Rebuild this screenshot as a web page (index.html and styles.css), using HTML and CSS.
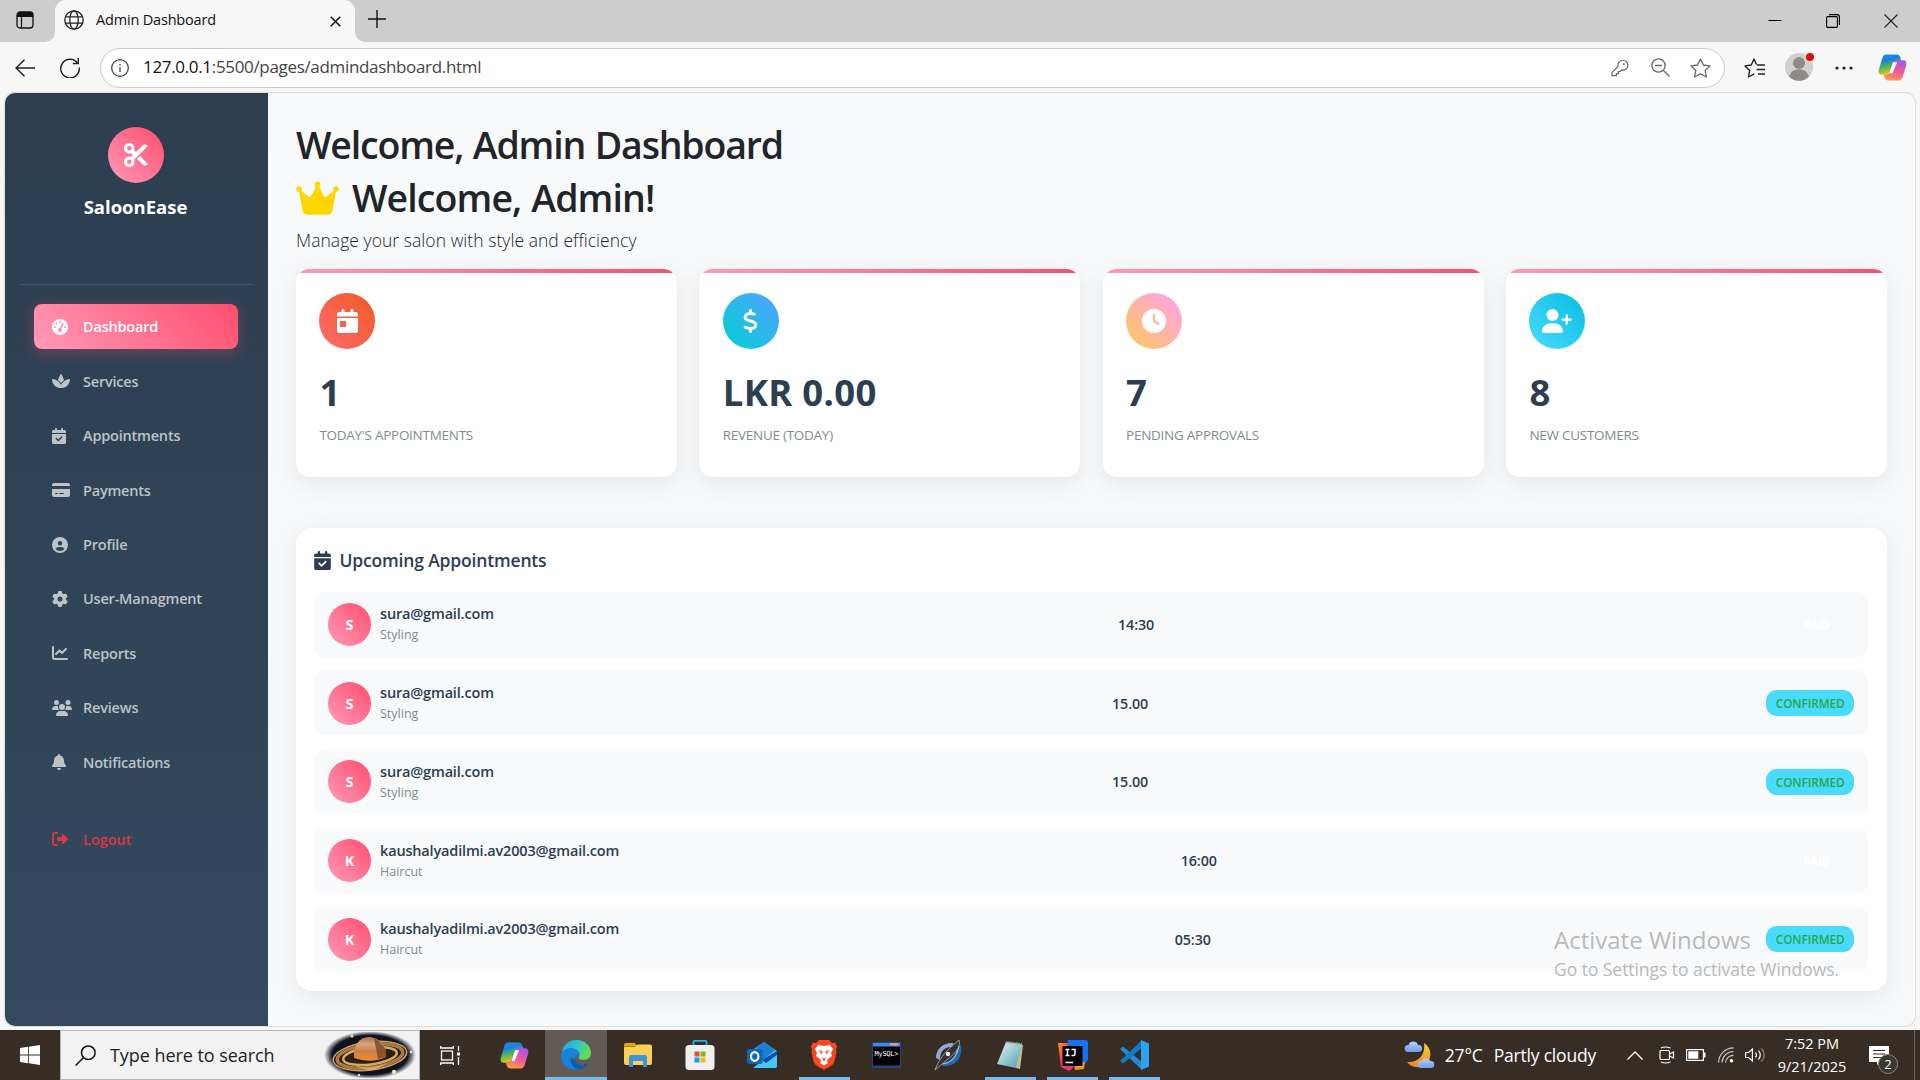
FILE: index.html
```html
<!DOCTYPE html>
<html lang="en">
<head>
<meta charset="utf-8">
<title>Admin Dashboard</title>
<link rel="stylesheet" href="styles.css">
</head>
<body>
<svg class="defs" width="0" height="0" aria-hidden="true">
  <defs>
    <linearGradient id="cpA" x1="0" y1="0" x2="0.3" y2="1"><stop offset="0" stop-color="#1a8ff0"/><stop offset=".35" stop-color="#1c7fe0"/><stop offset=".65" stop-color="#4fb957"/><stop offset="1" stop-color="#f2c11a"/></linearGradient>
    <linearGradient id="cpB" x1="0.6" y1="0" x2="0.3" y2="1"><stop offset="0" stop-color="#a855f0"/><stop offset=".5" stop-color="#f0569a"/><stop offset="1" stop-color="#ff9a4a"/></linearGradient>
    <linearGradient id="edA" x1="0" y1="0" x2="1" y2=".4"><stop offset="0" stop-color="#1ea4e8"/><stop offset=".5" stop-color="#2fc3d4"/><stop offset="1" stop-color="#62dc52"/></linearGradient>
    <linearGradient id="edB" x1="0" y1="0" x2="1" y2="1"><stop offset="0" stop-color="#1a90e0"/><stop offset="1" stop-color="#0c4fa0"/></linearGradient>
    <linearGradient id="moon" x1="0" y1="0" x2="0" y2="1"><stop offset="0" stop-color="#ffd23c"/><stop offset="1" stop-color="#f0821e"/></linearGradient>
    <linearGradient id="cloud" x1="0" y1="0" x2="0" y2="1"><stop offset="0" stop-color="#b9d0fa"/><stop offset="1" stop-color="#6f9cf0"/></linearGradient>
    <linearGradient id="pad" x1="0" y1="0" x2="1" y2="1"><stop offset="0" stop-color="#e4f6f7"/><stop offset="1" stop-color="#4f9fae"/></linearGradient>
    <linearGradient id="ij" x1="0" y1="0" x2="1" y2="1"><stop offset="0" stop-color="#ff8a1e"/><stop offset=".5" stop-color="#ff3358"/><stop offset="1" stop-color="#e0338a"/></linearGradient>
    <linearGradient id="planet" x1="0" y1="0" x2="0" y2="1"><stop offset="0" stop-color="#a8714a"/><stop offset=".3" stop-color="#d9a57c"/><stop offset=".6" stop-color="#c98044"/><stop offset="1" stop-color="#f08c28"/></linearGradient>
    <radialGradient id="space"><stop offset="0" stop-color="#0b0d1c"/><stop offset=".82" stop-color="#10121f"/><stop offset="1" stop-color="#10121f" stop-opacity="0"/></radialGradient>
    <symbol id="copilot" viewBox="0 0 28 26">
      <path d="M8 .5h10c2 0 3 1 3.600 3l1 3.500h-5c-2 0-3 1-3.600 3l-2.600 7c-.6 2-1.600 3-3.600 3H4C1 20 0 18 .8 15L4.300 3.500C5 1.500 6 .5 8 .5z" fill="url(#cpA)"/>
      <path d="M20 25.500H10c-2 0-3-1-3.600-3L5.700 20c3 .3 5-.3 5.900-3l3-8c.6-2 1.600-3 3.600-3H24c3 0 4 2 3.200 5l-3.500 11.500c-.6 2-1.700 3-3.700 3z" fill="url(#cpB)"/>
      <path d="M14.500 8h4l-4.500 10.500h-3z" fill="#fff"/>
    </symbol>
    <symbol id="cal-check" viewBox="0 0 448 512"><path d="M128 0c17.700 0 32 14.300 32 32V64H288V32c0-17.700 14.300-32 32-32s32 14.300 32 32V64h48c26.500 0 48 21.500 48 48v48H0V112C0 85.500 21.500 64 48 64H96V32c0-17.700 14.300-32 32-32zM0 192H448V464c0 26.500-21.500 48-48 48H48c-26.500 0-48-21.500-48-48V192zM329 305c9.400-9.400 9.400-24.600 0-33.900s-24.600-9.400-33.900 0l-95 95-47-47c-9.400-9.400-24.600-9.400-33.900 0s-9.400 24.600 0 33.900l64 64c9.400 9.400 24.600 9.400 33.900 0L329 305z"/></symbol>
  </defs>
</svg>

<header class="tabs">
  <div class="tab-actions"><svg width="18" height="18" viewBox="0 0 18 18"><rect x="1" y="1" width="16" height="16" rx="3" fill="none" stroke="#111" stroke-width="1.300"/><path d="M1 6V4a3 3 0 0 1 3-3h10a3 3 0 0 1 3 3v2z" fill="#111"/><path d="M5.500 5v12" stroke="#111" stroke-width="1.200"/></svg></div>
  <div class="tab">
    <svg width="20" height="20" viewBox="0 0 20 20" fill="none" stroke="#222" stroke-width="1.300"><circle cx="10" cy="10" r="9.200"/><ellipse cx="10" cy="10" rx="4.200" ry="9.200"/><path d="M1.500 6.800h17M1.500 13.200h17"/></svg>
    <span class="tab-title">Admin Dashboard</span>
    <svg class="tab-close" width="11" height="11" viewBox="0 0 11 11" stroke="#111" stroke-width="1.500"><path d="M.7.7l9.600 9.600M10.300.7L.7 10.300"/></svg>
  </div>
  <div class="tab-rest">
    <svg class="new-tab" width="18" height="18" viewBox="0 0 18 18" stroke="#111" stroke-width="1.400"><path d="M9 0v18M0 9h18"/></svg>
    <div class="win-controls">
      <svg width="14" height="14" viewBox="0 0 14 14" stroke="#000" stroke-width="1"><path d="M.5 6.500h13"/></svg>
      <svg width="14" height="14" viewBox="0 0 14 14" fill="none" stroke="#000" stroke-width="1.100"><rect x=".6" y="2.600" width="10.800" height="10.800" rx="1"/><path d="M3 .6h8a2.400 2.400 0 0 1 2.400 2.400v8"/></svg>
      <svg width="14" height="14" viewBox="0 0 14 14" stroke="#222" stroke-width="1.100"><path d="M.5.5l13 13M13.500.5l-13 13"/></svg>
    </div>
  </div>
</header>

<nav class="toolbar">
  <svg class="back" width="20" height="18" viewBox="0 0 20 18" fill="none" stroke="#222" stroke-width="1.400"><path d="M20 9H1M9.500.7L1 9l8.500 8.300"/></svg>
  <svg class="reload" width="22" height="21" viewBox="0 0 22 21" fill="none" stroke="#222" stroke-width="1.400"><path d="M18.500 6A9.300 9.300 0 1 0 20.300 10.500"/><path d="M19.300 1v5.500h-5.500"/></svg>
  <div class="address">
    <svg width="18" height="18" viewBox="0 0 18 18" fill="none" stroke="#444" stroke-width="1.300"><circle cx="9" cy="9" r="8.300"/><path d="M9 8v5M9 5v1.500"/></svg>
    <span class="url"><span class="host">127.0.0.1</span>:5500/pages/admindashboard.html</span>
    <svg class="key" width="18" height="18" viewBox="0 0 18 18" fill="none" stroke="#666" stroke-width="1.200"><path d="M7 7.500a5 5 0 1 1 3.600 3.600L9 12.600H7.300v2H5.400v2H1v-3.200z"/><circle cx="12.800" cy="5.200" r=".9" fill="#666" stroke="none"/></svg>
    <svg width="19" height="19" viewBox="0 0 19 19" fill="none" stroke="#666" stroke-width="1.300"><circle cx="7.500" cy="7.500" r="6.600"/><path d="M12.500 12.500l6 6M4 7.500h7"/></svg>
    <svg width="21" height="20" viewBox="0 0 21 20" fill="none" stroke="#666" stroke-width="1.300" stroke-linejoin="round"><path d="M10.500 1l2.900 6 6.600.9-4.800 4.600 1.200 6.500-5.900-3.100L4.600 19l1.200-6.500L1 7.900 7.600 7z"/></svg>
  </div>
  <svg class="favs" width="21" height="20" viewBox="0 0 21 20" fill="none" stroke="#222" stroke-width="1.400" stroke-linejoin="round"><path d="M12.500 6.500L10 1 7.300 7 1 7.900l4.600 4.600L4.500 19l5.800-3.200M13 7h8M12.500 11.500H21M14 16h7"/></svg>
  <svg class="user" width="30" height="30" viewBox="0 0 30 30"><circle cx="14" cy="16" r="14" fill="#d3d1ce"/><circle cx="14" cy="12" r="6" fill="#8f8a87"/><path d="M4 25.500a10.500 10.500 0 0 1 20 0A14 14 0 0 1 4 25.500z" fill="#8f8a87"/><circle cx="25" cy="6" r="4" fill="#e00b0b"/></svg>
  <svg class="more" width="18" height="4" viewBox="0 0 18 4" fill="#222"><circle cx="2" cy="2" r="1.600"/><circle cx="9" cy="2" r="1.600"/><circle cx="16" cy="2" r="1.600"/></svg>
  <svg class="cp" width="29" height="27"><use href="#copilot"/></svg>
</nav>

<div class="page">
  <aside class="sidebar">
    <div class="brand">
      <div class="brand-logo"><svg width="24" height="24" viewBox="0 0 512 512" fill="#fff"><path d="M256 192l-39.500-39.500c4.900-12.600 7.500-26.200 7.500-40.500C224 50.100 173.900 0 112 0S0 50.100 0 112s50.100 112 112 112c14.300 0 27.900-2.700 40.500-7.500L192 256l-39.500 39.500c-12.600-4.900-26.200-7.500-40.500-7.500C50.100 288 0 338.100 0 400s50.100 112 112 112s112-50.100 112-112c0-14.300-2.700-27.900-7.500-40.500L499.200 76.800c7.100-7.100 7.100-18.500 0-25.600c-28.300-28.300-74.100-28.300-102.400 0L256 192zm22.600 150.600L396.800 460.800c28.300 28.300 74.100 28.300 102.400 0c7.100-7.100 7.100-18.500 0-25.600L342.600 278.600l-64 64zM64 112a48 48 0 1 1 96 0 48 48 0 1 1 -96 0zm48 240a48 48 0 1 1 0 96 48 48 0 1 1 0-96z"/></svg></div>
      <span class="brand-name">SaloonEase</span>
    </div>
    <ul class="menu">
      <li class="item active"><svg viewBox="0 0 512 512" width="16" height="16"><path d="M0 256a256 256 0 1 1 512 0A256 256 0 1 1 0 256zM288 96a32 32 0 1 0 -64 0 32 32 0 1 0 64 0zM256 416c35.300 0 64-28.700 64-64c0-17.400-6.900-33.100-18.100-44.600L366 161.700c5.300-12.100-.2-26.300-12.300-31.600s-26.300 .2-31.600 12.300L257.900 288c-.6 0-1.300 0-1.900 0c-35.300 0-64 28.700-64 64s28.700 64 64 64zM176 144a32 32 0 1 0 -64 0 32 32 0 1 0 64 0zM96 288a32 32 0 1 0 0-64 32 32 0 1 0 0 64zm352-32a32 32 0 1 0 -64 0 32 32 0 1 0 64 0z"/></svg><span>Dashboard</span></li>
      <li class="item"><svg viewBox="0 0 576 512" width="18" height="16"><path d="M186 235C210 170 245 95 277 35q11-12 22 0C331 95 366 170 390 235C350 255 312 290 288 325C264 290 226 255 186 235z"/><path d="M0 206C0 196 5 191 15 192C130 200 230 265 288 375C346 265 446 200 561 192q15 0 15 14C570 340 470 480 311 480H265C106 480 6 340 0 206z"/></svg><span>Services</span></li>
      <li class="item"><svg width="14" height="16"><use href="#cal-check"/></svg><span>Appointments</span></li>
      <li class="item"><svg viewBox="0 0 576 512" width="18" height="16"><path d="M64 32C28.700 32 0 60.700 0 96v32H576V96c0-35.300-28.700-64-64-64H64zM576 224H0V416c0 35.300 28.700 64 64 64H512c35.300 0 64-28.700 64-64V224zM112 352h64c8.800 0 16 7.200 16 16s-7.200 16-16 16H112c-8.800 0-16-7.200-16-16s7.200-16 16-16zm112 16c0-8.800 7.200-16 16-16H368c8.800 0 16 7.200 16 16s-7.200 16-16 16H240c-8.800 0-16-7.200-16-16z"/></svg><span>Payments</span></li>
      <li class="item"><svg viewBox="0 0 512 512" width="16" height="16"><path d="M399 384.200C376.900 345.800 335.400 320 288 320H224c-47.400 0-88.900 25.800-111 64.200c35.200 39.200 86.200 63.800 143 63.800s107.800-24.700 143-63.800zM0 256a256 256 0 1 1 512 0A256 256 0 1 1 0 256zm256 16a72 72 0 1 0 0-144 72 72 0 1 0 0 144z" fill-rule="evenodd"/></svg><span>Profile</span></li>
      <li class="item"><svg viewBox="0 0 512 512" width="16" height="16"><path d="M495.900 166.600c3.200 8.700 .5 18.400-6.400 24.600l-43.300 39.400c1.100 8.300 1.700 16.800 1.700 25.400s-.6 17.100-1.700 25.400l43.300 39.400c6.900 6.200 9.600 15.900 6.400 24.600c-4.400 11.900-9.700 23.300-15.800 34.300l-4.700 8.100c-6.600 11-14 21.400-22.100 31.200c-5.900 7.200-15.700 9.600-24.500 6.800l-55.700-17.700c-13.400 10.300-28.200 18.900-44 25.400l-12.500 57.100c-2 9.100-9 16.300-18.200 17.800c-13.800 2.300-28 3.500-42.500 3.500s-28.700-1.200-42.500-3.500c-9.200-1.500-16.200-8.700-18.200-17.800l-12.500-57.100c-15.800-6.500-30.600-15.100-44-25.400L83.100 425.900c-8.800 2.800-18.600 .3-24.500-6.800c-8.100-9.800-15.500-20.200-22.100-31.200l-4.700-8.100c-6.100-11-11.400-22.400-15.800-34.300c-3.200-8.700-.5-18.400 6.400-24.600l43.300-39.400C64.600 273.100 64 264.600 64 256s.6-17.100 1.700-25.400L22.400 191.200c-6.900-6.200-9.600-15.900-6.400-24.600c4.400-11.900 9.700-23.300 15.800-34.300l4.700-8.100c6.600-11 14-21.400 22.100-31.200c5.900-7.200 15.700-9.600 24.500-6.800l55.700 17.700c13.400-10.300 28.200-18.900 44-25.400l12.500-57.100c2-9.100 9-16.300 18.200-17.800C227.300 1.200 241.500 0 256 0s28.700 1.200 42.500 3.500c9.200 1.500 16.200 8.700 18.200 17.800l12.500 57.100c15.800 6.500 30.600 15.100 44 25.400l55.700-17.700c8.800-2.800 18.600-.3 24.500 6.800c8.100 9.800 15.500 20.200 22.100 31.200l4.700 8.100c6.100 11 11.400 22.400 15.800 34.300zM256 336a80 80 0 1 0 0-160 80 80 0 1 0 0 160z"/></svg><span>User-Managment</span></li>
      <li class="item"><svg viewBox="0 0 512 512" width="16" height="16"><path d="M64 64c0-17.700-14.300-32-32-32S0 46.300 0 64V400c0 44.200 35.800 80 80 80H480c17.700 0 32-14.300 32-32s-14.300-32-32-32H80c-8.800 0-16-7.200-16-16V64zm406.600 86.600c12.500-12.500 12.500-32.800 0-45.300s-32.800-12.500-45.300 0L320 210.700l-57.400-57.400c-12.500-12.500-32.800-12.500-45.300 0l-112 112c-12.500 12.500-12.500 32.800 0 45.300s32.800 12.500 45.300 0L240 221.300l57.400 57.400c12.500 12.500 32.800 12.500 45.300 0l128-128z"/></svg><span>Reports</span></li>
      <li class="item"><svg viewBox="0 0 640 512" width="20" height="16"><path d="M144 0a80 80 0 1 1 0 160A80 80 0 1 1 144 0zM512 0a80 80 0 1 1 0 160A80 80 0 1 1 512 0zM0 298.700C0 239.800 47.800 192 106.700 192h42.700c15.900 0 31 3.500 44.600 9.700c-1.300 7.200-1.900 14.700-1.900 22.300c0 38.200 16.800 72.500 43.300 96c-.2 0-.4 0-.7 0H21.300C9.600 320 0 310.400 0 298.700zM405.300 320c-.2 0-.4 0-.7 0c26.600-23.500 43.300-57.800 43.300-96c0-7.600-.7-15-1.900-22.300c13.600-6.300 28.700-9.700 44.600-9.700h42.700C592.200 192 640 239.800 640 298.700c0 11.800-9.600 21.300-21.300 21.300H405.300zM224 224a96 96 0 1 1 192 0 96 96 0 1 1 -192 0zM128 485.300C128 411.700 187.700 352 261.300 352H378.700C452.300 352 512 411.700 512 485.300c0 14.700-11.900 26.700-26.700 26.700H154.700c-14.700 0-26.700-11.900-26.700-26.700z"/></svg><span>Reviews</span></li>
      <li class="item"><svg viewBox="0 0 448 512" width="14" height="16"><path d="M224 0c-17.700 0-32 14.300-32 32V51.200C119 66 64 130.600 64 208v18.800c0 47-17.300 92.400-48.500 127.600l-7.400 8.300c-8.400 9.400-10.400 22.900-5.300 34.400S19.400 416 32 416H416c12.600 0 24-7.400 29.200-18.900s3.100-25-5.300-34.400l-7.400-8.300C401.300 319.200 384 273.900 384 226.800V208c0-77.400-55-142-128-156.800V32c0-17.700-14.300-32-32-32zm45.300 493.300c12-12 18.700-28.300 18.700-45.300H160c0 17 6.700 33.300 18.700 45.300s28.300 18.700 45.300 18.700s33.300-6.700 45.300-18.700z"/></svg><span>Notifications</span></li>
      <li class="item logout"><svg viewBox="0 0 512 512" width="16" height="16"><path d="M377.900 105.900L500.700 228.700c7.200 7.200 11.300 17.100 11.300 27.300s-4.100 20.100-11.300 27.300L377.900 406.100c-6.400 6.400-15 9.900-24 9.900c-18.700 0-33.900-15.200-33.900-33.900l0-62.100-128 0c-17.700 0-32-14.300-32-32l0-64c0-17.700 14.300-32 32-32l128 0 0-62.100c0-18.700 15.200-33.900 33.900-33.900c9 0 17.600 3.600 24 9.900zM160 96L96 96c-17.700 0-32 14.300-32 32l0 256c0 17.700 14.300 32 32 32l64 0c17.700 0 32 14.300 32 32s-14.300 32-32 32l-64 0c-53 0-96-43-96-96L0 128C0 75 43 32 96 32l64 0c17.700 0 32 14.300 32 32s-14.300 32-32 32z"/></svg><span>Logout</span></li>
    </ul>
  </aside>

  <main class="main">
    <h1 class="title">Welcome, Admin Dashboard</h1>
    <h1 class="title second"><svg viewBox="0 0 576 512" width="43" height="38" fill="#ffd700"><path d="M309 106c11.400-7 19-19.700 19-34c0-22.100-17.900-40-40-40s-40 17.900-40 40c0 14.400 7.600 27 19 34L209.700 220.600c-9.100 18.200-32.700 23.400-48.600 10.700L72 160c5-6.700 8-15 8-24c0-22.100-17.900-40-40-40S0 113.900 0 136s17.900 40 40 40c.2 0 .5 0 .7 0L86.400 427.400c5.500 30.400 32 52.600 63 52.600l277.200 0c30.900 0 57.400-22.100 63-52.600L535.300 176c.2 0 .5 0 .7 0c22.100 0 40-17.900 40-40s-17.900-40-40-40s-40 17.900-40 40c0 9 3 17.300 8 24l-89.100 71.300c-15.900 12.700-39.500 7.500-48.600-10.700L309 106z"/></svg><span>Welcome, Admin!</span></h1>
    <p class="lead">Manage your salon with style and efficiency</p>

    <section class="stats">
      <article class="card">
        <div class="bubble orange"><svg viewBox="0 0 448 512" width="21" height="24"><path fill-rule="evenodd" d="M128 0c17.700 0 32 14.300 32 32V64H288V32c0-17.700 14.300-32 32-32s32 14.300 32 32V64h48c26.500 0 48 21.500 48 48v48H0V112C0 85.500 21.500 64 48 64H96V32c0-17.700 14.300-32 32-32zM0 192H448V464c0 26.500-21.500 48-48 48H48c-26.500 0-48-21.500-48-48V192zm80 64c-8.800 0-16 7.200-16 16v96c0 8.800 7.200 16 16 16h96c8.800 0 16-7.200 16-16V272c0-8.800-7.200-16-16-16H80z"/></svg></div>
        <div class="value">1</div><div class="label">TODAY'S APPOINTMENTS</div>
      </article>
      <article class="card">
        <div class="bubble blue"><svg viewBox="0 0 320 512" width="15" height="24"><path d="M160 0c17.700 0 32 14.300 32 32V67.700c1.600 .2 3.100 .4 4.700 .7c.4 .1 .7 .1 1.100 .2l48 8.800c17.400 3.200 28.900 19.900 25.700 37.200s-19.900 28.900-37.200 25.700l-47.500-8.700c-31.300-4.600-58.900-1.500-78.300 6.200s-27.200 18.300-29 28.100c-2 10.700-.5 16.700 1.200 20.400c1.800 3.900 5.500 8.300 12.800 13.200c16.300 10.700 41.300 17.700 73.700 26.300l2.900 .8c28.600 7.600 63.600 16.800 89.600 33.800c14.200 9.300 27.600 21.900 35.900 39.500c8.500 17.900 10.300 37.900 6.400 59.200c-6.900 38-33.100 63.400-65.600 76.700c-13.700 5.600-28.600 9.200-44.400 11V480c0 17.700-14.300 32-32 32s-32-14.300-32-32V445.100c-.4-.1-.9-.1-1.300-.2l-.2 0 0 0c-24.400-3.800-64.500-14.300-91.500-26.300c-16.100-7.200-23.400-26.100-16.200-42.200s26.100-23.400 42.200-16.200c20.900 9.300 55.300 18.500 75.200 21.600c31.900 4.700 58.200 2 76-5.300c16.900-6.900 24.600-16.900 26.800-28.900c1.900-10.600 .4-16.700-1.300-20.400c-1.900-4-5.600-8.400-13-13.300c-16.400-10.700-41.500-17.700-74-26.300l-2.800-.7 0 0C119.400 279.300 84.400 270 58.400 253c-14.200-9.300-27.500-22-35.800-39.600c-8.400-17.900-10.100-37.900-6.100-59.200C23.700 116 52.300 91.200 84.800 78.300c13.300-5.300 27.900-8.900 43.200-11V32c0-17.700 14.300-32 32-32z"/></svg></div>
        <div class="value">LKR 0.00</div><div class="label">REVENUE (TODAY)</div>
      </article>
      <article class="card">
        <div class="bubble peach"><svg viewBox="0 0 512 512" width="24" height="24"><path d="M256 0a256 256 0 1 1 0 512A256 256 0 1 1 256 0zM232 120V256c0 8 4 15.500 10.700 20l96 64c11 7.400 25.900 4.400 33.300-6.700s4.400-25.900-6.700-33.300L280 243.200V120c0-13.300-10.700-24-24-24s-24 10.700-24 24z"/></svg></div>
        <div class="value">7</div><div class="label">PENDING APPROVALS</div>
      </article>
      <article class="card">
        <div class="bubble cyan"><svg viewBox="0 0 640 512" width="30" height="24"><path d="M96 128a128 128 0 1 1 256 0A128 128 0 1 1 96 128zM0 482.300C0 383.800 79.800 304 178.300 304h91.400C368.200 304 448 383.800 448 482.300c0 16.400-13.300 29.700-29.700 29.700H29.700C13.300 512 0 498.700 0 482.300zM504 312V248H440c-13.300 0-24-10.700-24-24s10.700-24 24-24h64V136c0-13.300 10.700-24 24-24s24 10.700 24 24v64h64c13.300 0 24 10.700 24 24s-10.700 24-24 24H552v64c0 13.300-10.700 24-24 24s-24-10.700-24-24z"/></svg></div>
        <div class="value">8</div><div class="label">NEW CUSTOMERS</div>
      </article>
    </section>

    <section class="panel">
      <h2 class="panel-title"><svg width="17" height="19"><use href="#cal-check"/></svg><span>Upcoming Appointments</span></h2>
      <div class="rows">
        <div class="row"><div class="client"><div class="avatar">S</div><div class="info"><div class="name">sura@gmail.com</div><div class="service">Styling</div></div></div><div class="time">14:30</div><span class="badge paid">PAID</span></div>
        <div class="row"><div class="client"><div class="avatar">S</div><div class="info"><div class="name">sura@gmail.com</div><div class="service">Styling</div></div></div><div class="time">15.00</div><span class="badge">CONFIRMED</span></div>
        <div class="row"><div class="client"><div class="avatar">S</div><div class="info"><div class="name">sura@gmail.com</div><div class="service">Styling</div></div></div><div class="time">15.00</div><span class="badge">CONFIRMED</span></div>
        <div class="row"><div class="client"><div class="avatar">K</div><div class="info"><div class="name">kaushalyadilmi.av2003@gmail.com</div><div class="service">Haircut</div></div></div><div class="time">16:00</div><span class="badge paid">PAID</span></div>
        <div class="row"><div class="client"><div class="avatar">K</div><div class="info"><div class="name">kaushalyadilmi.av2003@gmail.com</div><div class="service">Haircut</div></div></div><div class="time">05:30</div><span class="badge">CONFIRMED</span></div>
      </div>
    </section>
  </main>
</div>

<div class="watermark"><div class="wm-title">Activate Windows</div><div class="wm-text">Go to Settings to activate Windows.</div></div>

<footer class="taskbar">
  <div class="start"><svg width="20" height="20" viewBox="0 0 20 20" fill="#fff"><path d="M0 2.900l8.200-1.100v7.800H0zM9 1.700L20 0v9.600H9zM0 10.400h8.200v7.800L0 17.100zM9 10.400h11V20L9 18.300z"/></svg></div>
  <div class="search">
    <svg width="21" height="21" viewBox="0 0 21 21" fill="none" stroke="#111" stroke-width="1.500"><circle cx="13.300" cy="7.700" r="6.800"/><path d="M8.600 12.500L.6 20.500"/></svg>
    <span class="search-text">Type here to search</span>
    <svg class="saturn" width="92" height="46" viewBox="0 0 92 46"><ellipse cx="46" cy="23" rx="46" ry="24" fill="url(#space)"/><g transform="rotate(-7 46 24)"><ellipse cx="46" cy="24" rx="37" ry="14" fill="#2a2018" stroke="#c9a06a" stroke-width="1.500"/><ellipse cx="46" cy="24" rx="33" ry="11.500" fill="none" stroke="#a87a3c" stroke-width="3.500"/><ellipse cx="46" cy="24" rx="27" ry="8.500" fill="none" stroke="#d9ab68" stroke-width="2.500"/></g><path d="M30 26c-1-12 5-21 15-21s18 9 17 20q-15 7-32 1z" fill="url(#planet)"/><path d="M50 6c8 4 13 11 12 19l-8 2z" fill="#6b3d1e" opacity=".7"/><path d="M30 33q16 6 33-2-10 7-17 7t-16-5z" fill="#d9ab68"/><g fill="#f5dfc0"><circle cx="28" cy="4" r="1.500"/><circle cx="70" cy="40" r="2.200"/><circle cx="35" cy="43" r="1.200"/><circle cx="87" cy="20" r="1.200"/><circle cx="15" cy="41" r="1"/></g></svg>
  </div>
  <div class="app view"><svg width="20" height="19" viewBox="0 0 20 19" fill="none" stroke="#fff" stroke-width="1.300"><rect x="1.500" y="5" width="11" height="9"/><path d="M.7 0v2h12.600V0M.7 19v-2h12.600v2M18.500 0v5M18.500 11v8"/><path d="M17 8h3" stroke-width="3"/></svg></div>
  <div class="app"><svg width="29" height="27"><use href="#copilot"/></svg></div>
  <div class="app active"><svg width="30" height="30" viewBox="0 0 30 30"><path d="M1 14C1 6 7 0 15.500 0S30 6 30 13c0 4-3 7-7.500 7-3 0-5-1.200-5-2.500 0-.8 1-1.400 1-3C18.500 11 15 9 11 9 6 9 2 12 1 16z" fill="url(#edA)"/><path d="M.5 15.500C1 10.500 5.500 8 10 8c5 0 8.500 3 8.500 6.500 0 1.600-1 2.300-1 3C17 12 9 13 9.500 20c.3 5 4.500 8.500 9 8.800C8 32.500-.5 25 .5 15.500z" fill="#1583dc"/><path d="M12 14.500c-3 3-2.500 9 2 12 4 2.500 9 2 13-3-7 3.500-13 .5-13-5 0-1.500.5-2.800 1.500-4z" fill="url(#edB)"/><path d="M9.500 18c-.5 6 4 11 9 11.500 3.500-.5 6.500-2.500 8.500-6-6 3-12 1-13.500-4.500z" fill="#0f5bb0"/></svg></div>
  <div class="app"><svg width="28" height="24" viewBox="0 0 28 24"><path d="M0 2q0-2 2-2h9l2 3H0z" fill="#e5a50f"/><path d="M0 3.500h11l2.500-2H26q2 0 2 2V20q0 2-2 2H2q-2 0-2-2z" fill="#fdcf55"/><path d="M5 24V14q0-2 2-2h14q2 0 2 2v10h-4v-6H9v6z" fill="#3b93de"/></svg></div>
  <div class="app"><svg width="30" height="30" viewBox="0 0 30 30"><path d="M8.500 6V2q0-1.200 1.200-1.200h10.600q1.200 0 1.200 1.200v4" fill="none" stroke="#26b2e6" stroke-width="1.800"/><rect y="5" x=".5" width="29" height="25" rx="3.500" fill="#efefef"/><path d="M9.500 11.500h5v5h-5z" fill="#f04e22"/><path d="M15.500 11.500h5v5h-5z" fill="#7db916"/><path d="M9.500 17.500h5v5h-5z" fill="#0ea5ea"/><path d="M15.500 17.500h5v5h-5z" fill="#fcb813"/></svg></div>
  <div class="app"><svg width="30" height="28" viewBox="0 0 30 28"><path d="M2 11L17 1l13 9v4L16 25z" fill="#2aa6e8"/><path d="M17 1l13 9-15 9-6-13z" fill="#1c7fd0"/><path d="M30 11v14q0 2-2 2H6L28 9z" fill="#48c6f5"/><path d="M15 19l15-9v4L19 22z" fill="#0d4fa8"/><rect y="8" width="15.500" height="15" rx="2" fill="#0f64c0"/><ellipse cx="7.700" cy="15.500" rx="3.700" ry="4.300" fill="none" stroke="#fff" stroke-width="2.200"/></svg></div>
  <div class="app open"><svg width="26" height="30" viewBox="0 0 26 30"><path d="M8 0h10l3 3 3-.5 2 4-1 3c1 3-1 9-2 13-1 3-7 6-10 7.500C10 28.500 4 25.500 3 22.500 2 18.500 0 12.500 1 9.500l-1-3 2-4L5 3z" fill="#fb4622"/><path d="M7 5l4 .8h4L19 5l3 4-2 4 1 3-4 3-1 2 1 2-4 2.500L9 23l1-2-1-2-4-3 1-3-2-4z" fill="#fff"/><path d="M7.500 10l4 1.500-.5 3zM18.500 10l-4 1.500.5 3zM11 17l2 1.500 2-1.500-2 5z" fill="#fb4622"/></svg></div>
  <div class="app"><svg width="29" height="26" viewBox="0 0 29 26"><rect width="29" height="26" rx="1" fill="#26477c"/><rect x="1" y="1" width="27" height="3" fill="#3c8ce8"/><path d="M18 1h8v2.500h-8z" fill="#e09a90"/><rect x="1" y="5" width="27" height="18.500" fill="#020202"/><text x="2.500" y="13.500" font-family="DejaVu Sans Mono, monospace" font-size="7" fill="#fff" textLength="24">MySQL&gt;</text></svg></div>
  <div class="app"><svg width="28" height="30" viewBox="0 0 28 30"><path d="M2 18C2 9 9 2 20 3l-3 4C10 7 6 12 6 20z" fill="#8fa9d8"/><path d="M27 5c2 12-5 22-18 21l-3-3C16 23 22 16 24 6z" fill="#2368b0"/><path d="M9 24C20 22 23 14 25 6" fill="none" stroke="#8fc0ea" stroke-width="1.200"/><path d="M25 0c2 6-3 13-11 19L1 30c3-8 6-12 10-17S21 4 25 0z" fill="#35322f" stroke="#b8b8b8" stroke-width=".8"/><circle cx="14" cy="14" r="2.200" fill="#eee"/></svg></div>
  <div class="app open"><svg width="28" height="28" viewBox="0 0 28 28"><path d="M10 1l17 3-3 24-4-1z" fill="#c7b88f"/><path d="M10 1l16 2-6 24L1 23z" fill="url(#pad)"/><path d="M10 1l16 2" stroke="#999" stroke-width="2" stroke-dasharray="1.500 1"/></svg></div>
  <div class="app open"><svg width="31" height="31" viewBox="0 0 31 31"><path d="M11 0h17q3 0 3 3v17l-7 7L9 10z" fill="#1572f5"/><path d="M17 22h11l-1 7-9 1z" fill="#f8902a"/><path d="M1 3h9l8 22-4 5q-2 1-4 0l-6-3z" fill="url(#ij)"/><rect x="5.500" y="6" width="20" height="20" fill="#000"/><g fill="none" stroke="#fff" stroke-width="1.500"><path d="M8.500 9.500h4M8.500 15.500h4M10.500 9.500v6M14.500 9.500h3.500v4.500q0 1.500-1.500 1.500h-2M8.500 22.500h7.500"/></g></svg></div>
  <div class="app open"><svg width="30" height="30" viewBox="0 0 30 30"><path d="M1 9l3-2.500L23 22v8z" fill="#1f8ad6"/><path d="M1 21l3 2.500L23 8V0z" fill="#1478c4"/><path d="M22 0l8 3.500v23L22 30z" fill="#2ba3f0"/></svg></div>

  <div class="tray">
    <svg class="weather" width="31" height="28" viewBox="0 0 31 28"><path d="M20 2a13 13 0 1 1-17 19C14 22 22 14 20 2z" fill="url(#moon)"/><path d="M4 11a3.500 3.500 0 0 1 .5-7A5 5 0 0 1 14 4a3.500 3.500 0 0 1 1 7z" fill="url(#cloud)"/><path d="M17 27a3.500 3.500 0 0 1 .5-7 5 5 0 0 1 9 0 3.500 3.500 0 0 1 .5 7z" fill="url(#cloud)"/></svg>
    <span class="temp">27°C</span><span class="cond">Partly cloudy</span>
    <svg class="chev" width="16" height="9" viewBox="0 0 16 9" fill="none" stroke="#fff" stroke-width="1.400"><path d="M.5 8.500L8 1l7.500 7.500"/></svg>
    <svg class="meet" width="16" height="18" viewBox="0 0 16 18" fill="none" stroke="#fff" stroke-width="1.200"><rect x="1" y="4.500" width="9.500" height="9" rx="1"/><path d="M10.500 8l4-2v6l-4-2M2 2q4-2 9.500 0M2 16q4 2 9.500 0"/></svg>
    <svg class="batt" width="20" height="12" viewBox="0 0 20 12"><rect x=".6" y=".6" width="16.800" height="10.800" fill="none" stroke="#fff" stroke-width="1.200"/><path d="M2.300 2.300h10v7.400h-10zM18 3.500h1.500v5H18z" fill="#fff"/></svg>
    <svg class="wifi" width="16" height="16" viewBox="0 0 16 16" fill="none" stroke="#ccc" stroke-width="1.200"><path d="M.6 15.500A15 15 0 0 1 15.500.8M4 15.500A11.500 11.500 0 0 1 15.500 4.500M7.500 15.500a8 8 0 0 1 8-7.200"/><circle cx="13.500" cy="13.800" r="1.800" fill="#fff" stroke="none"/></svg>
    <svg class="vol" width="21" height="16" viewBox="0 0 21 16" fill="none" stroke="#fff" stroke-width="1.200"><path d="M.6 5.500h3L7.400 2v12L3.600 10.500h-3zM10.500 5.500q2 2.500 0 5M13.500 3.500q3.500 4.500 0 9"/><path d="M16.500 1.500q5.500 6.500 0 13" stroke="#888"/></svg>
    <div class="clock"><span>7:52 PM</span><span>9/21/2025</span></div>
    <div class="notif"><svg width="20" height="19" viewBox="0 0 20 19"><path d="M0 0h20v16h-8l-4 3v-3H0z" fill="#fff"/><path d="M4 4.500h12M4 8h12M4 11.500h8" stroke="#332b23" stroke-width="1.200"/></svg><span class="count">2</span></div>
    <div class="peek"></div>
  </div>
</footer>
</body>
</html>
```
FILE: styles.css
```css
* { box-sizing: border-box; }
body { margin: 0; width: 1920px; height: 1080px; overflow: hidden; display: flex; flex-direction: column; background: #f7f7f7; font-family: "Open Sans", "Noto Sans", sans-serif; color: #212529; }
svg { display: block; flex: none; }
span { white-space: nowrap; }
.defs { position: absolute; }

/* browser chrome */
.tabs { height: 42px; flex: none; display: flex; background: linear-gradient(#cdcdcd 60%, #f7f7f7 60%); }
.tab-actions { width: 55px; height: 42px; padding: 11px 0 0 16px; border-bottom-right-radius: 10px; background: #cdcdcd; }
.tab { width: 300px; height: 42px; display: flex; align-items: center; padding: 0 14px 3px 9px; background: #f7f7f7; border-radius: 11px 11px 0 0; }
.tab-title { margin-left: 12px; font-size: 14.5px; letter-spacing: -.18px; color: #111; }
.tab-close { margin-left: auto; margin-top: 3px; }
.tab-rest { flex: 1; display: flex; align-items: flex-end; border-bottom-left-radius: 10px; background: #cdcdcd; }
.new-tab { margin: 0 0 14px 13px; }
.win-controls { margin-left: auto; height: 42px; display: flex; align-items: center; gap: 44px; padding-right: 22px; }
.toolbar { height: 51px; flex: none; background: #f7f7f7; display: flex; align-items: center; }
.back { margin-left: 15px; }
.reload { margin-left: 24px; }
.address { width: 1625px; height: 40px; margin-left: 19px; border: 1px solid #c9c9c9; border-radius: 20px; background: #fff; display: flex; align-items: center; padding: 0 13px 0 10px; }
.url { margin: 0 0 2px 14px; font-size: 17px; letter-spacing: -.33px; color: #444; }
.host { color: #111; }
.key { margin-left: auto; margin-right: 22px; }
.address svg:last-child { margin-left: 20px; }
.favs { margin-left: 19px; }
.user { margin-left: 20px; margin-bottom: 3px; }
.more { margin-left: 20px; }
.cp { margin-left: 25px; }

/* page frame */
.page { height: 933px; flex: none; margin: 0 5px; display: flex; border-radius: 10px; overflow: hidden; background: #f8f9fb; box-shadow: 0 0 0 1px #dedede; }
.sidebar { width: 263px; flex: none; background: linear-gradient(180deg, #2c3e50, #34495e); padding: 34px 30px 0 29px; }
.brand { height: 158px; margin: 0 -15px 0 -14px; padding-right: 2px; border-bottom: 1px solid rgba(255,255,255,.1); display: flex; flex-direction: column; align-items: center; }
.brand-logo { width: 56px; height: 56px; border-radius: 50%; background: linear-gradient(45deg, #ff9ab7, #ff4d6d); display: flex; align-items: center; justify-content: center; }
.brand-name { margin-top: 11px; line-height: 26px; font-size: 18.5px; font-weight: 700; color: #fff; }
.menu { list-style: none; margin: 19px 0 0; padding: 0; display: flex; flex-direction: column; gap: 9.2px; }
.item { height: 45.200px; display: flex; align-items: center; padding-left: 18px; border-radius: 8px; font-size: 14.5px; font-weight: 600; letter-spacing: -.2px; color: #bdc3c7; }
.item svg { fill: #bdc3c7; }
.item span { margin-left: auto; width: 155px; }
.item.active { color: #fff; background: linear-gradient(45deg, #ff9ab7, #ff4d6d); box-shadow: 0 4px 15px rgba(255,77,109,.3); }
.item.active svg { fill: #fff; }
.item.active + .item { margin-top: .5px; }
.item.logout { margin-top: 22.800px; letter-spacing: 0; color: #dc3545; }
.item.logout svg { fill: #dc3545; }

/* main column */
.main { flex: 1; padding: 29px 28px 0; }
.title { margin: 0; height: 46px; line-height: 46px; font-size: 37.500px; font-weight: 600; letter-spacing: -1.170px; word-spacing: 1px; display: flex; align-items: center; white-space: nowrap; }
.title.second { margin-top: 6.500px; gap: 13px; letter-spacing: -.9px; }
.lead { margin: 6px 0 15px; line-height: 27.500px; font-size: 17.500px; font-weight: 300; letter-spacing: .05px; }
.stats { display: grid; grid-template-columns: repeat(4, 1fr); gap: 22.400px; }
.card { height: 208px; border-radius: 14px; padding: 24px 23.400px; box-shadow: 0 6px 24px rgba(0,0,0,.08); background: linear-gradient(90deg, #ff9ab7, #ff4d6d) 0 0 / 100% 4px no-repeat #fff; }
.bubble { width: 56px; height: 56px; border-radius: 50%; display: flex; align-items: center; justify-content: center; }
.bubble svg { fill: #fff; }
.orange { background: linear-gradient(45deg, #ff6b6b, #ee5a24); }
.blue { background: linear-gradient(45deg, #00d2d3, #54a0ff); }
.peach { background: linear-gradient(45deg, #feca57, #ff9ff3); }
.cyan { background: linear-gradient(45deg, #48dbfb, #0abde3); }
.value { margin-top: 21px; line-height: 44px; font-size: 36.500px; font-weight: 700; letter-spacing: .3px; color: #2c3e50; }
.label { margin-top: 10px; line-height: 22px; font-size: 13.500px; letter-spacing: -.27px; color: #7f8c8d; white-space: nowrap; }
.panel { margin-top: 51px; height: 463px; border-radius: 16px; background: #fff; box-shadow: 0 6px 24px rgba(0,0,0,.08); padding: 18px 19px 0 18px; }
.panel-title { margin: 0; height: 28px; display: flex; align-items: center; gap: 8.500px; font-size: 17.500px; font-weight: 600; letter-spacing: -.17px; color: #2c3e50; }
.panel-title svg { fill: #2c3e50; }
.rows { margin-top: 18px; display: flex; flex-direction: column; gap: 14.100px; }
.row { height: 64.700px; border-radius: 10px; background: #f8f9fb; padding: 0 14px; display: flex; align-items: center; justify-content: space-between; }
.client { display: flex; align-items: center; }
.avatar { width: 43px; height: 43px; border-radius: 50%; background: linear-gradient(45deg, #ff9ab7, #ff4d6d); color: #fff; font-size: 14.500px; font-weight: 700; display: flex; align-items: center; justify-content: center; }
.info { margin-left: 9px; }
.name { line-height: 22px; font-size: 14.500px; font-weight: 600; letter-spacing: -.17px; color: #2c3e50; }
.service { line-height: 20px; font-size: 12.500px; color: #7f8c8d; }
.time { font-size: 14.300px; font-weight: 600; letter-spacing: -.1px; color: #2c3e50; }
.badge { height: 26px; line-height: 27px; padding: 0 9.300px; border-radius: 11px; background: #48dbfb; color: #28a745; font-size: 11.800px; font-weight: 600; letter-spacing: -.06px; }
.badge.paid { background: none; color: #fff; padding: 0 24.500px; font-weight: 700; letter-spacing: -.4px; }

/* activation notice over the page */
.watermark { position: absolute; left: 1554px; top: 923px; color: #b9b9b9; }
.wm-title { line-height: 34px; font-size: 24px; }
.wm-text { line-height: 25px; font-size: 17.500px; letter-spacing: -.05px; }

/* taskbar */
.taskbar { height: 50px; margin-top: 4px; flex: none; background: #372d24; display: flex; align-items: stretch; color: #fff; }
.start { width: 60px; display: flex; align-items: center; justify-content: center; }
.search { width: 360px; background: #f2f2f2; border: 1px solid #b5b5b5; display: flex; align-items: center; padding: 0 3px 0 14px; }
.search-text { margin-left: 14px; font-size: 18px; letter-spacing: -.06px; color: #222; }
.saturn { margin-left: auto; }
.app { width: 62px; display: flex; align-items: center; justify-content: center; }
.app.view { width: 63px; padding-right: 3px; }
.app.active { background: #635a53; border-bottom: 3px solid #76b9ed; padding-top: 3px; }
.app.open { background: linear-gradient(#76b9ed, #76b9ed) center bottom / 51px 3px no-repeat; }
.tray { margin-left: auto; display: flex; align-items: center; }
.temp { margin-left: 10px; font-size: 17.500px; letter-spacing: -.13px; }
.cond { margin-left: 11px; font-size: 17.500px; letter-spacing: -.2px; }
.chev { margin-left: 31px; }
.meet { margin-left: 16px; }
.batt { margin-left: 11px; }
.wifi { margin-left: 12px; }
.vol { margin-left: 11px; }
.clock { width: 80px; margin-left: 6px; display: flex; flex-direction: column; align-items: center; font-size: 14.500px; line-height: 23px; }
.notif { position: relative; width: 46px; padding-left: 17px; }
.count { position: absolute; left: 26px; top: 8px; width: 20px; height: 20px; border: 1px solid #8a8580; border-radius: 50%; background: #3b3733; font-size: 13px; line-height: 18px; text-align: center; }
.peek { width: 6px; height: 50px; margin-left: 16px; border-left: 1px solid #6e665e; }
```
